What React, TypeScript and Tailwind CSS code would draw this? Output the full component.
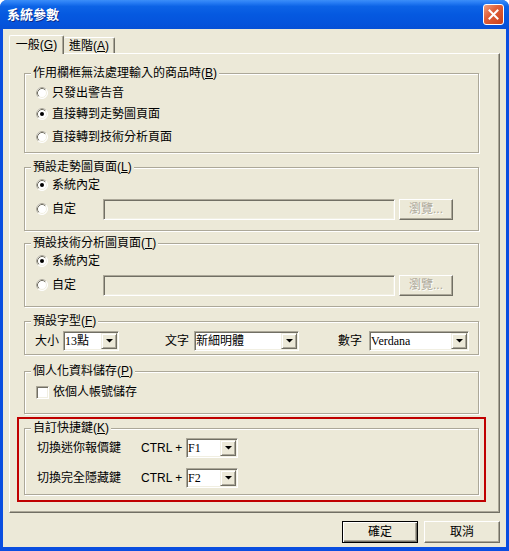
import React from "react";

const SUNKEN =
  "border border-t-[#aca899] border-l-[#aca899] border-r-white border-b-white shadow-[inset_1px_1px_0_#716f64,inset_-1px_-1px_0_#f1efe2] p-[1px]";

function Mn({ k }: { k: string }) {
  return (
    <>
      (<u>{k}</u>)
    </>
  );
}

function Group({
  title,
  className,
  children,
}: {
  title: React.ReactNode;
  className: string;
  children: React.ReactNode;
}) {
  return (
    <fieldset
      className={`w-[455px] border border-[#aca899] shadow-[inset_1px_1px_0_#fff,1px_1px_0_#fff] ${className}`}
    >
      <legend className="ml-[6px] px-[2px] leading-[14px] bg-[#ece9d8]">{title}</legend>
      {children}
    </fieldset>
  );
}

function RadioMark({ checked }: { checked?: boolean }) {
  return (
    <svg width="12" height="12" viewBox="0 0 12 12" className="shrink-0">
      <circle cx="6" cy="6" r="5.5" fill="#fff" stroke="#fff" />
      <path d="M2.11 9.89A5.5 5.5 0 0 1 9.89 2.11" fill="none" stroke="#aca899" />
      <circle cx="6" cy="6" r="4.5" fill="#fff" stroke="#f1efe2" />
      <path d="M2.82 9.18A4.5 4.5 0 0 1 9.18 2.82" fill="none" stroke="#716f64" />
      {checked && <circle cx="6" cy="6" r="2" fill="#000" />}
    </svg>
  );
}

function Radio({ label, checked, className }: { label: string; checked?: boolean; className: string }) {
  return (
    <div className={`flex items-center h-[20px] pl-[11px] ${className}`}>
      <RadioMark checked={checked} />
      <span className="ml-[4px]">{label}</span>
    </div>
  );
}

function DropBtn() {
  return (
    <div className="w-[16px] h-[16px] shrink-0 flex items-center justify-center bg-[#ece9d8] border border-t-[#f1efe2] border-l-[#f1efe2] border-r-[#716f64] border-b-[#716f64] shadow-[inset_1px_1px_0_#fff,inset_-1px_-1px_0_#aca899]">
      <svg width="7" height="4" viewBox="0 0 7 4">
        <polygon points="0,0 7,0 3.5,3.6" fill="#000" />
      </svg>
    </div>
  );
}

function Select({ value, className }: { value: string; className: string }) {
  return (
    <div className={`flex h-[20px] bg-white ${SUNKEN} ${className}`}>
      <span className="flex-1 leading-[16px] font-['Liberation_Serif','Noto_Sans_CJK_TC',serif] whitespace-nowrap overflow-hidden">
        {value}
      </span>
      <DropBtn />
    </div>
  );
}

function PathRow() {
  return (
    <div className="flex items-center h-[22px] pl-[11px] mt-[3px]">
      <div className="flex items-center w-[67px]">
        <RadioMark />
        <span className="ml-[4px]">自定</span>
      </div>
      <div className={`w-[292px] h-[21px] bg-[#ece9d8] ${SUNKEN}`} />
      <button
        disabled
        className="ml-[4px] w-[54px] h-[21px] flex items-center justify-center bg-[#ece9d8] border border-t-white border-l-white border-r-[#716f64] border-b-[#716f64] shadow-[inset_-1px_-1px_0_#aca899] text-[#aca899] [text-shadow:1px_1px_0_#fff]"
      >
        瀏覽...
      </button>
    </div>
  );
}

function PushButton({ label, isDefault }: { label: string; isDefault?: boolean }) {
  return (
    <button
      className={`w-[76px] h-[22px] flex items-center justify-center bg-[#ece9d8] ${
        isDefault
          ? "border border-black shadow-[inset_1px_1px_0_#fff,inset_-1px_-1px_0_#716f64,inset_-2px_-2px_0_#aca899]"
          : "border border-t-white border-l-white border-r-[#716f64] border-b-[#716f64] shadow-[inset_-1px_-1px_0_#aca899]"
      }`}
    >
      {label}
    </button>
  );
}

export default function App() {
  return (
    <div className="w-[509px] h-[551px] flex flex-col bg-[#0a4ee0] rounded-t-[7px] overflow-hidden text-[12px] text-black font-['Liberation_Sans','Noto_Sans_CJK_TC',sans-serif]">
      {/* title bar */}
      <div className="h-[29px] shrink-0 flex items-center justify-between pl-[7px] pr-[5px] bg-[linear-gradient(to_bottom,#3b8ef8_0%,#2a7ff5_8%,#0c63e6_22%,#0559e0_50%,#0554dc_80%,#0650d6_100%)]">
        <span className="text-white font-bold text-[13px] leading-none [text-shadow:1px_1px_0_#0a2a8a]">
          系統參數
        </span>
        <div className="w-[21px] h-[21px] rounded-[3px] border border-white flex items-center justify-center bg-[linear-gradient(135deg,#f0a080_0%,#e0603a_40%,#c8401a_100%)]">
          <svg width="11" height="11" viewBox="0 0 11 11">
            <path d="M1.5 1.5L9.5 9.5M9.5 1.5L1.5 9.5" stroke="#fff" strokeWidth="2" strokeLinecap="square" />
          </svg>
        </div>
      </div>

      {/* body */}
      <div className="flex-1 mx-[3px] mb-[4px] bg-[#ece9d8] flex flex-col pt-[6px] pl-[6px] pr-[6px]">
        {/* tabs */}
        <div className="flex items-end h-[18px] relative z-10">
          <div className="h-[19px] -mb-[1px] w-[55px] flex items-center justify-center pb-[1px] bg-[#ece9d8] border border-b-0 border-t-white border-l-white border-r-[#716f64] shadow-[inset_-1px_0_0_#aca899] rounded-t-[2px]">
            一般<Mn k="G" />
          </div>
          <div className="h-[16px] w-[51px] flex items-center justify-center pt-[1px] border border-b-0 border-t-white border-l-0 border-r-[#716f64] shadow-[inset_-1px_0_0_#aca899] rounded-t-[2px]">
            進階<Mn k="A" />
          </div>
        </div>

        {/* panel */}
        <div className="w-[491px] h-[460px] border border-t-white border-l-white border-r-[#716f64] border-b-[#716f64] shadow-[inset_-1px_-1px_0_#aca899] pt-[12px] pl-[14px]">
          <Group title={<>作用欄框無法處理輸入的商品時<Mn k="B" /></>} className="h-[87px]">
            <Radio label="只發出警告音" className="mt-[3px]" />
            <Radio label="直接轉到走勢圖頁面" checked className="mt-[1px]" />
            <Radio label="直接轉到技術分析頁面" className="mt-[3px]" />
          </Group>

          <Group title={<>預設走勢圖頁面<Mn k="L" /></>} className="h-[71px] mt-[7px]">
            <Radio label="系統內定" checked className="mt-[1px]" />
            <PathRow />
          </Group>

          <Group title={<>預設技術分析圖頁面<Mn k="T" /></>} className="h-[71px] mt-[5px]">
            <Radio label="系統內定" checked className="mt-[1px]" />
            <PathRow />
          </Group>

          <Group title={<>預設字型<Mn k="F" /></>} className="h-[41px] mt-[7px]">
            <div className="flex items-center h-[20px] mt-[3px] pl-[10px]">
              <span>大小</span>
              <Select value="13點" className="w-[56px] ml-[4px]" />
              <span className="ml-[46px]">文字</span>
              <Select value="新細明體" className="w-[105px] ml-[5px]" />
              <span className="ml-[39px]">數字</span>
              <Select value="Verdana" className="w-[100px] ml-[7px]" />
            </div>
          </Group>

          <Group title={<>個人化資料儲存<Mn k="P" /></>} className="h-[50px] mt-[9px]">
            <div className="flex items-center h-[20px] mt-[4px] pl-[11px]">
              <div className={`w-[13px] h-[13px] bg-white ${SUNKEN}`} />
              <span className="ml-[4px]">依個人帳號儲存</span>
            </div>
          </Group>

          <div className="w-[469px] -ml-[7px] mt-[3px] border-2 border-[#c00000] px-[5px] pt-[2px] pb-[5px]">
            <Group title={<>自訂快捷鍵<Mn k="K" /></>} className="h-[74px]">
              <div className="flex items-center h-[20px] mt-[3px] pl-[12px]">
                <span className="w-[104px]">切換迷你報價鍵</span>
                <span className="w-[45px]">CTRL +</span>
                <Select value="F1" className="w-[52px]" />
              </div>
              <div className="flex items-center h-[20px] mt-[10px] pl-[12px]">
                <span className="w-[104px]">切換完全隱藏鍵</span>
                <span className="w-[45px]">CTRL +</span>
                <Select value="F2" className="w-[52px]" />
              </div>
            </Group>
          </div>
        </div>

        {/* buttons */}
        <div className="flex justify-end gap-[6px] mt-[8px] pr-[0px]">
          <PushButton label="確定" isDefault />
          <PushButton label="取消" />
        </div>
      </div>
    </div>
  );
}
